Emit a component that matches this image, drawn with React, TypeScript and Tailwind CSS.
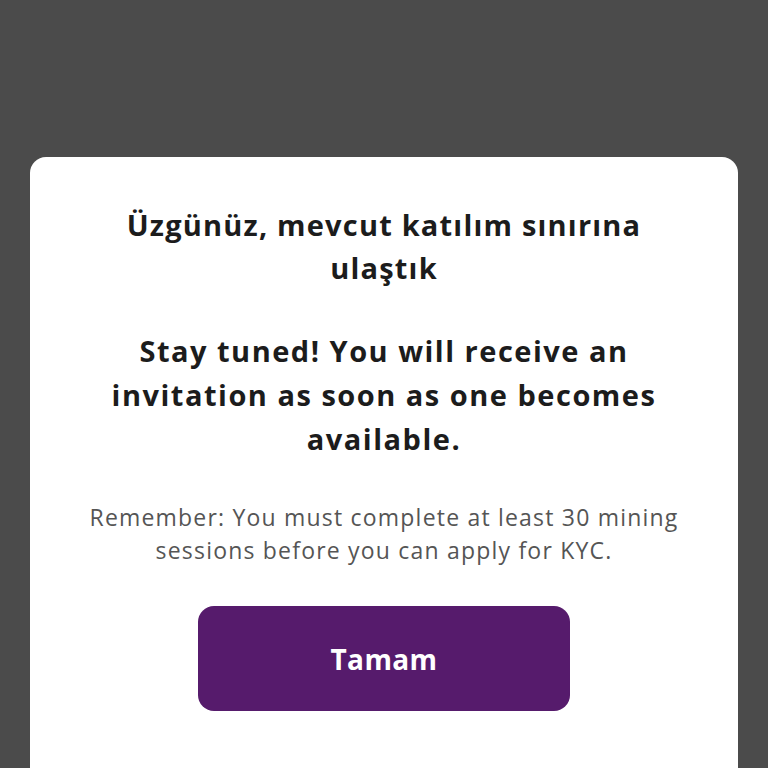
export default function App() {
    return (
        <div className="h-[768px] overflow-hidden bg-[#4b4b4b] pt-[157px] px-[30px]" style={{ fontFamily: "'Open Sans', 'Noto Sans', sans-serif" }}>
            <div className="bg-white rounded-t-[16px] h-[640px] flex flex-col items-center pt-[46px]">
                <h2 className="text-[29px] leading-[43px] font-bold tracking-[1.2px] text-[#1c1c1c] text-center whitespace-nowrap">
                    Üzgünüz, mevcut katılım sınırına
                    <br />
                    ulaştık
                </h2>
                <p className="mt-[40px] text-[29px] leading-[44px] font-bold tracking-[1.5px] text-[#1c1c1c] text-center whitespace-nowrap">
                    Stay tuned! You will receive an
                    <br />
                    invitation as soon as one becomes
                    <br />
                    available.
                </p>
                <p className="mt-[40px] text-[23px] leading-[33px] tracking-[1.2px] text-[#555555] text-center whitespace-nowrap">
                    Remember: You must complete at least 30 mining
                    <br />
                    sessions before you can apply for KYC.
                </p>
                <button className="mt-[39px] w-[372px] h-[105px] rounded-[16px] bg-[#561b6c] text-white text-[28px] tracking-[0.4px] font-bold">
                    Tamam
                </button>
            </div>
        </div>
    );
}
